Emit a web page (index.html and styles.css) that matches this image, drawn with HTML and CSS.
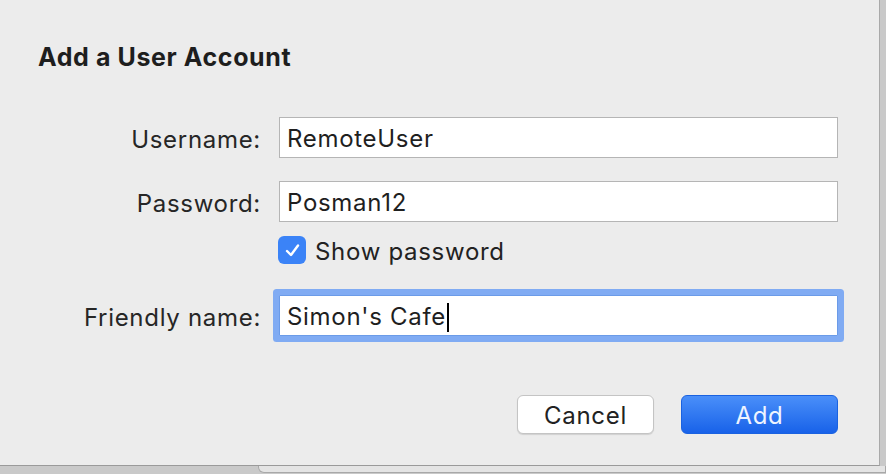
FILE: index.html
```html
<!DOCTYPE html>
<html>
<head>
    <title>Add a User Account</title>
    <link rel="stylesheet" href="styles.css">
</head>
<body>
    <div class="dialog">
        <h2 class="title">Add a User Account</h2>
        <div class="form">
            <div class="row">
                <label class="label">Username:</label>
                <div class="field">RemoteUser</div>
            </div>
            <div class="row password-row">
                <label class="label">Password:</label>
                <div class="field">Posman12</div>
            </div>
            <div class="row check-row">
                <div></div>
                <div class="check">
                    <span class="checkbox">
                        <svg width="17" height="17" viewBox="0 0 17 17">
                            <path d="M3 9 L7 13 L14 3.5" fill="none" stroke="#fff" stroke-width="2.4" stroke-linecap="round" stroke-linejoin="round"/>
                        </svg>
                    </span>
                    <span class="check-text">Show password</span>
                </div>
            </div>
            <div class="row friendly-row">
                <label class="label">Friendly name:</label>
                <div class="field focused">Simon's Cafe<span class="caret"></span></div>
            </div>
        </div>
        <div class="buttons">
            <button class="button cancel">Cancel</button>
            <button class="button add">Add</button>
        </div>
    </div>
    <div class="behind">
        <div class="behind-field"></div>
    </div>
</body>
</html>
```

FILE: styles.css
```css
body {
    margin: 0;
    background-color: #c9c9c9;
    font-family: Inter, "Noto Sans", sans-serif;
    color: #222;
    overflow: hidden;
}
.dialog {
    width: 880px;
    height: 466px;
    box-sizing: border-box;
    background-color: #ececec;
    border-right: 1px solid #a9a9a9;
    border-bottom: 1px solid #9a9a9a;
    padding-top: 41px;
    position: relative;
    z-index: 1;
}
.title {
    margin: 0 0 0 38px;
    font-size: 25px;
    font-weight: 700;
    letter-spacing: 0.6px;
    line-height: 32px;
    color: #1e1e1e;
}
.form {
    margin-top: 44px;
}
.row {
    display: grid;
    grid-template-columns: 261px 559px;
    column-gap: 18px;
    align-items: center;
    font-size: 24px;
    letter-spacing: 0.7px;
}
.password-row {
    margin-top: 23px;
}
.check-row {
    margin-top: 14px;
}
.friendly-row {
    margin-top: 31px;
}
.label {
    text-align: right;
    color: #262626;
    padding-top: 4px;
}
.field {
    height: 41px;
    box-sizing: border-box;
    border: 1px solid #b5b5b5;
    background-color: #fff;
    padding: 2px 0 0 7px;
    line-height: 37px;
    color: #1f1f1f;
}
.check {
    display: flex;
    align-items: center;
    gap: 9px;
    margin-left: -1px;
    height: 28px;
}
.check-text {
    padding-top: 2px;
}
.checkbox {
    width: 28px;
    height: 28px;
    border-radius: 6px;
    background-color: #3b83f7;
    display: flex;
    align-items: center;
    justify-content: center;
}
.field.focused {
    border-color: #6b9be8;
    box-shadow: 0 0 0 6px #80abf3;
    border-radius: 1px;
}
.caret {
    display: inline-block;
    width: 2px;
    height: 29px;
    background-color: #000;
    vertical-align: -7px;
    margin-left: 1px;
}
.buttons {
    display: flex;
    justify-content: flex-end;
    gap: 27px;
    margin-top: 59px;
    padding-right: 41px;
}
.button {
    height: 39px;
    border-radius: 6px;
    font-family: Inter, "Noto Sans", sans-serif;
    font-size: 24px;
    letter-spacing: 0.7px;
    cursor: pointer;
    padding: 2px 0 0;
}
.cancel {
    width: 137px;
    background-color: #fff;
    border: 1px solid #c4c4c4;
    box-shadow: 0 1px 1px rgba(0, 0, 0, 0.12);
    color: #222;
}
.add {
    width: 157px;
    border: 1px solid #1a62e0;
    background: linear-gradient(#4a8ff9, #1862e9);
    color: #eef4ff;
}
.behind {
    height: 8px;
    padding-left: 258px;
}
.behind-field {
    height: 6px;
    background-color: #e4e4e4;
    border: 1px solid #a8a8a8;
    border-top: none;
    border-radius: 0 0 0 6px;
}
```
